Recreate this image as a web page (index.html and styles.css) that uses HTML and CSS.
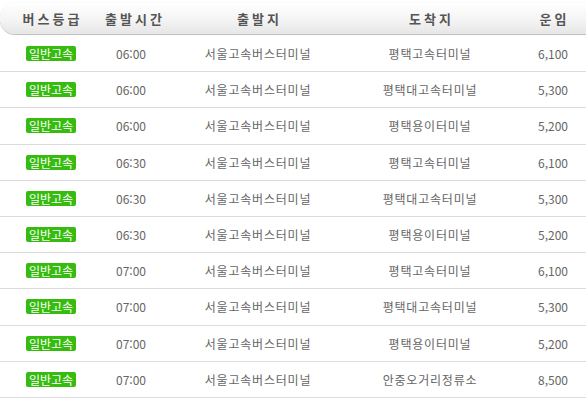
FILE: index.html
```html
<!DOCTYPE html>
<html lang="ko">
    <head>
        <meta charset="UTF-8" />
        <title>시간표</title>
        <link rel="stylesheet" href="styles.css">
    </head>
    <body>
        <div class="timetable">
            <div class="head">
                <span>버스등급</span>
                <span>출발시간</span>
                <span>출발지</span>
                <span>도착지</span>
                <span>운임</span>
            </div>
            <ul class="rows">
                <li><span><em class="grade">일반고속</em></span><span>06:00</span><span class="place">서울고속버스터미널</span><span class="place">평택고속터미널</span><span>6,100</span></li>
                <li><span><em class="grade">일반고속</em></span><span>06:00</span><span class="place">서울고속버스터미널</span><span class="place">평택대고속터미널</span><span>5,300</span></li>
                <li><span><em class="grade">일반고속</em></span><span>06:00</span><span class="place">서울고속버스터미널</span><span class="place">평택용이터미널</span><span>5,200</span></li>
                <li><span><em class="grade">일반고속</em></span><span>06:30</span><span class="place">서울고속버스터미널</span><span class="place">평택고속터미널</span><span>6,100</span></li>
                <li><span><em class="grade">일반고속</em></span><span>06:30</span><span class="place">서울고속버스터미널</span><span class="place">평택대고속터미널</span><span>5,300</span></li>
                <li><span><em class="grade">일반고속</em></span><span>06:30</span><span class="place">서울고속버스터미널</span><span class="place">평택용이터미널</span><span>5,200</span></li>
                <li><span><em class="grade">일반고속</em></span><span>07:00</span><span class="place">서울고속버스터미널</span><span class="place">평택고속터미널</span><span>6,100</span></li>
                <li><span><em class="grade">일반고속</em></span><span>07:00</span><span class="place">서울고속버스터미널</span><span class="place">평택대고속터미널</span><span>5,300</span></li>
                <li><span><em class="grade">일반고속</em></span><span>07:00</span><span class="place">서울고속버스터미널</span><span class="place">평택용이터미널</span><span>5,200</span></li>
                <li><span><em class="grade">일반고속</em></span><span>07:00</span><span class="place">서울고속버스터미널</span><span class="place">안중오거리정류소</span><span>8,500</span></li>
            </ul>
        </div>
    </body>
</html>
```

FILE: styles.css
```css
html, body {
    margin: 0;
    background: #fff;
}

body {
    font-family: "Noto Sans CJK KR", "DejaVu Sans", sans-serif;
    font-size: 12px;
    color: #666;
}

.timetable {
    width: 586px;
    padding-top: 3px;
}

.head, .rows li {
    display: grid;
    grid-template-columns: 102px 58px 196px 148px 82px;
    align-items: center;
    text-align: center;
    white-space: nowrap;
}

/* last column is cut by the window, keep text where it was */
.head span:last-child, .rows li span:last-child {
    padding-left: 16px;
}

.head {
    height: 31px;
    border-radius: 16px 0 0 16px;
    background: linear-gradient(#ffffff, #f4f4f4 55%, #e6e6e6);
    box-shadow: 0 1px 1px #bdbdbd, 0 0 1px #d8d8d8;
    font-size: 13px;
    font-weight: bold;
    color: #555;
    letter-spacing: 3px;
    margin-bottom: 2px;
}

.head span {
    text-indent: 3px;
}

.rows {
    list-style: none;
    margin: 0;
    padding: 0;
}

.rows li {
    height: 35.2px;
    border-bottom: 1px solid #dcdcdc;
}

.place {
    letter-spacing: 0.8px;
}

.grade {
    display: inline-block;
    font-style: normal;
    background: #36bb0f;
    color: #fff;
    font-size: 12px;
    line-height: 15px;
    padding: 0 3px;
    border-radius: 2px;
}
```
